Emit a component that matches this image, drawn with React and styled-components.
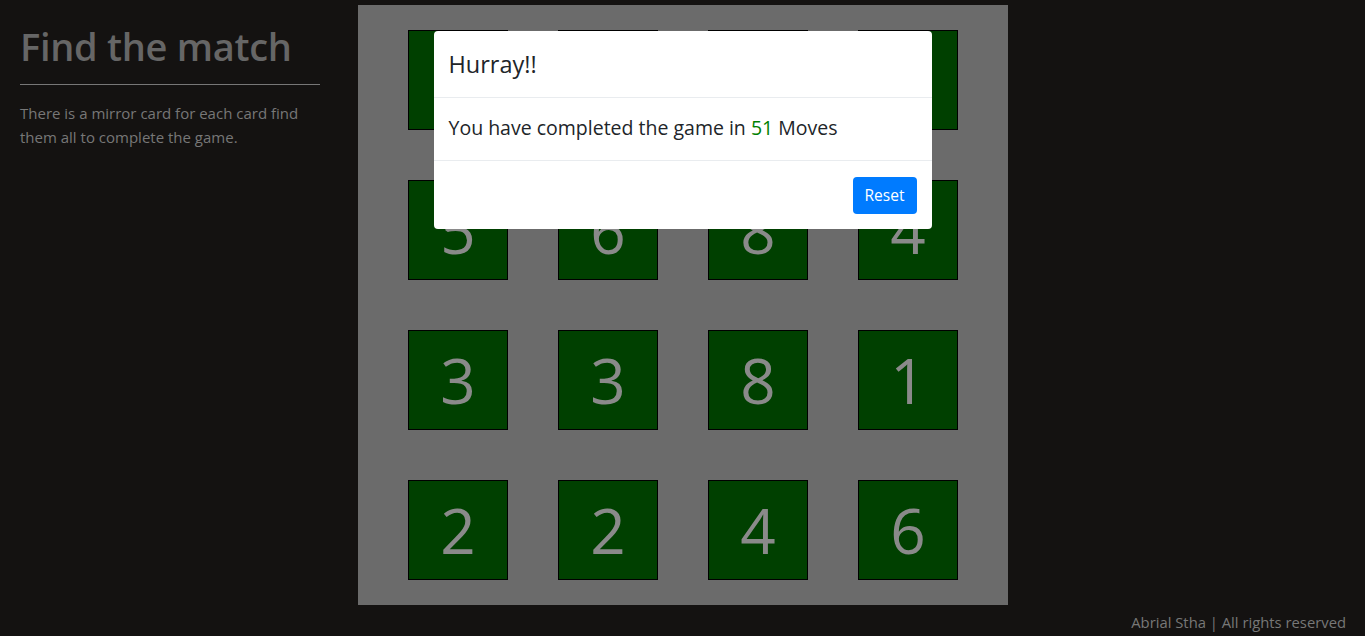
import styled, { createGlobalStyle } from "styled-components";

const GlobalStyle = createGlobalStyle`
  * {
    box-sizing: border-box;
  }
  body {
    margin: 0;
    background: #141211;
    font-family: "Open Sans", "Noto Sans", sans-serif;
  }
`;

const Page = styled.div`
  position: relative;
  min-height: 636px;
  display: flex;
  align-items: flex-start;
`;

const Sidebar = styled.aside`
  width: 300px;
  margin: 0 38px 0 20px;
  padding-top: 22px;
`;

const Title = styled.h1`
  margin: 0;
  font-size: 38px;
  font-weight: 600;
  line-height: 48px;
  color: #666666;
  letter-spacing: -0.3px;
`;

const Rule = styled.hr`
  border: none;
  border-top: 1px solid #777777;
  margin: 14px 0 16px;
`;

const Desc = styled.p`
  margin: 0;
  font-size: 15px;
  line-height: 24px;
  color: #777777;
`;

const Board = styled.section`
  width: 650px;
  height: 600px;
  margin-top: 5px;
  padding: 25px 50px;
  background: #6b6b6b;
  display: grid;
  grid-template-columns: repeat(4, 100px);
  grid-auto-rows: 100px;
  gap: 50px;
`;

const Card = styled.div`
  border: 1px solid #000;
  background: #004000;
  display: flex;
  align-items: center;
  justify-content: center;
  font-size: 62px;
  color: #8a8a8a;
  line-height: 1;
`;

const Footer = styled.footer`
  position: absolute;
  right: 19px;
  bottom: 4px;
  font-size: 14.8px;
  color: #777777;
`;

const Modal = styled.div`
  position: fixed;
  top: 31px;
  left: 50%;
  transform: translateX(-50%);
  width: 498px;
  background: #fff;
  border-radius: 4px;
  color: #212529;
`;

const ModalHeader = styled.div`
  height: 67px;
  padding: 0 15px;
  display: flex;
  align-items: center;
  border-bottom: 1px solid #e9ecef;
`;

const ModalTitle = styled.h4`
  margin: 0;
  font-size: 23.5px;
  font-weight: 400;
`;

const ModalBody = styled.div`
  height: 63px;
  padding: 0 15px 4px;
  display: flex;
  align-items: center;
  border-bottom: 1px solid #e9ecef;
  font-size: 19.5px;
`;

const Count = styled.span`
  color: #008000;
`;

const ModalFooter = styled.div`
  height: 68px;
  padding: 0 15px;
  display: flex;
  align-items: center;
  justify-content: flex-end;
`;

const Button = styled.button`
  width: 64px;
  height: 37px;
  border: none;
  border-radius: 4px;
  background: #007bff;
  color: #fff;
  font-family: inherit;
  font-size: 15.5px;
`;

const cards = [7, 5, 2, 7, 5, 6, 8, 4, 3, 3, 8, 1, 2, 2, 4, 6];

function App() {
  return (
    <Page>
      <GlobalStyle />
      <Sidebar>
        <Title>Find the match</Title>
        <Rule />
        <Desc>
          There is a mirror card for each card find them all to complete the
          game.
        </Desc>
      </Sidebar>
      <Board>
        {cards.map((n, i) => (
          <Card key={i}>{n}</Card>
        ))}
      </Board>
      <Footer>Abrial Stha | All rights reserved</Footer>
      <Modal>
        <ModalHeader>
          <ModalTitle>Hurray!!</ModalTitle>
        </ModalHeader>
        <ModalBody>
          <span>
            You have completed the game in <Count>51</Count> Moves
          </span>
        </ModalBody>
        <ModalFooter>
          <Button>Reset</Button>
        </ModalFooter>
      </Modal>
    </Page>
  );
}

export default App;
